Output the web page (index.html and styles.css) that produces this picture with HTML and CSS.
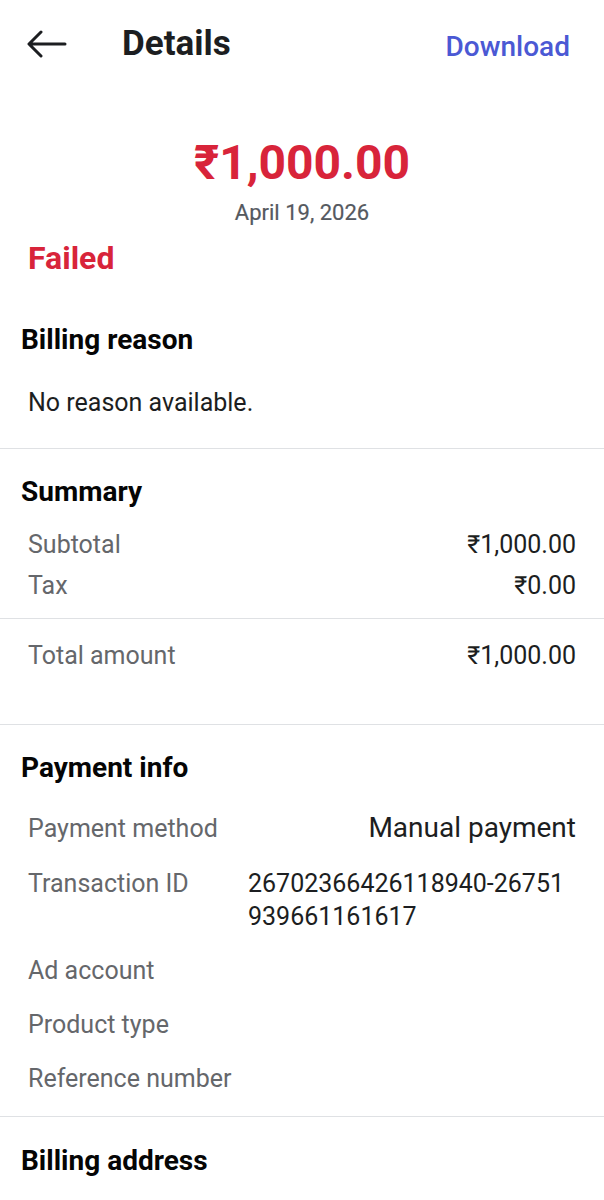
FILE: index.html
```html
<!DOCTYPE html>
<html lang="en">
<head>
<meta charset="utf-8">
<title>Details</title>
<link rel="stylesheet" href="styles.css">
</head>
<body>
<div class="page">
  <header class="topbar">
    <svg class="back" width="40" height="28" viewBox="0 0 40 28" aria-hidden="true">
      <path d="M38 14H3M14 2L2 14l12 12" fill="none" stroke="#1c1e21" stroke-width="3" stroke-linecap="round" stroke-linejoin="round"/>
    </svg>
    <h1 class="title">Details</h1>
    <a class="download">Download</a>
  </header>

  <section class="hero">
    <div class="amount">₹1,000.00</div>
    <div class="date">April 19, 2026</div>
  </section>
  <div class="status">Failed</div>

  <section class="block reason">
    <h2 class="heading">Billing reason</h2>
    <p class="reason-text">No reason available.</p>
  </section>

  <section class="block summary">
    <h2 class="heading">Summary</h2>
    <div class="rows">
      <div class="row"><span class="label">Subtotal</span><span class="value">₹1,000.00</span></div>
      <div class="row"><span class="label">Tax</span><span class="value">₹0.00</span></div>
    </div>
    <div class="total">
      <div class="row"><span class="label">Total amount</span><span class="value">₹1,000.00</span></div>
    </div>
  </section>

  <section class="block payment">
    <h2 class="heading">Payment info</h2>
    <div class="info">
      <div class="row method"><span class="label">Payment method</span><span class="value big">Manual payment</span></div>
      <div class="grid-row"><span class="label">Transaction ID</span><span class="value id">26702366426118940-26751 939661161617</span></div>
      <div class="row"><span class="label">Ad account</span></div>
      <div class="row"><span class="label">Product type</span></div>
      <div class="row"><span class="label">Reference number</span></div>
    </div>
  </section>

  <section class="block address">
    <h2 class="heading">Billing address</h2>
  </section>
</div>
</body>
</html>
```

FILE: styles.css
```css
* { box-sizing: border-box; }
html, body { margin: 0; padding: 0; background: #ffffff; }
body {
  font-family: Roboto, "Noto Sans", "Liberation Sans", sans-serif;
  color: #1c1e21;
}
.page { width: 604px; }

.topbar {
  height: 88px;
  display: flex;
  align-items: center;
  padding: 0 34px 0 27px;
}
.back { display: block; flex: none; }
.title {
  margin: 0 0 0 55px;
  font-size: 35px;
  line-height: 40px;
  font-weight: 700;
  color: #1c1e21;
}
.download {
  margin-left: auto;
  font-size: 28px;
  line-height: 40px;
  font-weight: 500;
  color: #4b59d4;
  margin-top: 6px;
}

.hero { text-align: center; padding-top: 47px; }
.amount {
  font-size: 48px;
  line-height: 56px;
  font-weight: 700;
  color: #d8243a;
}
.date {
  margin-top: 8px;
  font-size: 22px;
  line-height: 28px;
  font-weight: 400;
  color: #55595f;
  -webkit-text-stroke: 0.2px #55595f;
}
.status {
  margin-top: 11px;
  padding-left: 28px;
  font-size: 32px;
  line-height: 40px;
  font-weight: 700;
  color: #d8243a;
}

.heading {
  margin: 0;
  padding-left: 21px;
  font-size: 28px;
  line-height: 36px;
  font-weight: 700;
  color: #050505;
}
.block { border-bottom: 1px solid #dfe1e4; }
.reason { margin-top: 44px; padding-bottom: 29px; }
.reason-text {
  margin: 29px 0 0;
  padding-left: 28px;
  font-size: 25px;
  line-height: 32px;
  color: #1c1e21;
}

.summary { padding-top: 25px; padding-bottom: 52px; }
.rows {
  display: flex;
  flex-direction: column;
  gap: 9px;
  margin-top: 19px;
  padding: 0 28px 16px;
  border-bottom: 1px solid #dfe1e4;
}
.total { padding: 21px 28px 0; }
.row {
  display: flex;
  justify-content: space-between;
  align-items: baseline;
  font-size: 25px;
  line-height: 32px;
}
.label { color: #65676b; }
.value { color: #1c1e21; }

.payment { padding-top: 25px; padding-bottom: 21px; }
.info {
  display: flex;
  flex-direction: column;
  gap: 22px;
  margin-top: 26px;
  padding: 0 28px;
}
.value.big { font-size: 28px; }
.grid-row {
  display: grid;
  grid-template-columns: 220px 1fr;
  font-size: 25px;
  line-height: 33px;
}

.address { border-bottom: none; padding-top: 26px; }
```
